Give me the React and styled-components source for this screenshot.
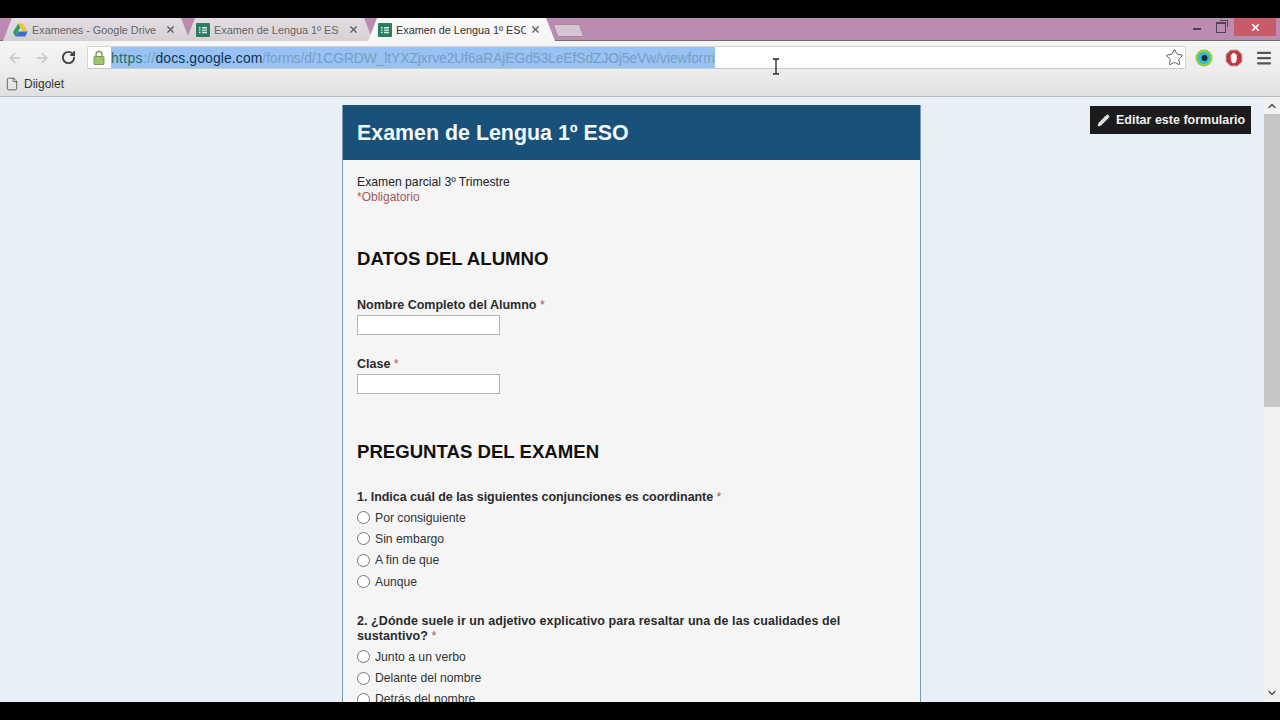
import React from "react";
import styled, { createGlobalStyle } from "styled-components";
import { ArrowLeft, ArrowRight, RotateCw, Star, Menu, X, Pencil, File, ChevronUp } from "lucide-react";

const Global = createGlobalStyle`
  html, body {
    margin: 0;
    padding: 0;
    height: 100%;
    background: #000;
    overflow: hidden;
    font-family: "Liberation Sans", Arial, sans-serif;
  }
`;

const Screen = styled.div`
  position: relative;
  width: 1280px;
  height: 720px;
  padding: 18px 0;
  box-sizing: border-box;
  background: #000;
  display: flex;
  flex-direction: column;
`;

const TabStrip = styled.div`
  height: 23px;
  box-sizing: border-box;
  flex: none;
  background: #bb8bb0;
  display: flex;
  align-items: flex-end;
  padding-left: 3px;
  border-bottom: 1px solid #6f6a72;
`;

const Tab = styled.div`
  width: 187px;
  height: 23px;
  margin-right: ${({ $gap }) => $gap}px;
  margin-bottom: -1px;
  padding: 0 14.5px 0 10px;
  box-sizing: border-box;
  display: flex;
  align-items: center;
  gap: 4px;
  flex: none;
  background: ${({ $active }) => ($active ? "#f7f7f7" : "linear-gradient(#e4dde3, #d4d1d4)")};
  clip-path: polygon(0 100%, 9px 0, calc(100% - 9px) 0, 100% 100%);
  font-size: 10.85px;
  color: ${({ $active }) => ($active ? "#333" : "#666")};
`;

const TabTitle = styled.span`
  flex: 1;
  min-width: 0;
  margin-right: ${({ $mr }) => $mr}px;
  white-space: nowrap;
  overflow: hidden;
`;

const NewTab = styled.div`
  width: 27px;
  height: 13px;
  margin: 0 0 3px 0;
  background: #d6c4d4;
  border: 1px solid #a78a9f;
  box-sizing: border-box;
  transform: skewX(20deg);
  border-radius: 2px;
`;

const WindowControls = styled.div`
  margin-left: auto;
  height: 100%;
  display: flex;
  align-items: flex-start;
`;

const WinButton = styled.div`
  width: ${({ $w }) => $w}px;
  height: 18px;
  display: flex;
  align-items: center;
  justify-content: center;
  background: ${({ $close }) => ($close ? "#c75c68" : "transparent")};
  color: ${({ $close }) => ($close ? "#fff" : "#4a4552")};
`;

const MinimizeIcon = styled.div`
  width: 8px;
  height: 2px;
  margin-top: 4px;
  background: #4a4552;
`;

const RestoreIcon = styled.div`
  position: relative;
  width: 8px;
  height: 8px;
  border: 1px solid #4a4552;
  border-top-width: 2px;
  &::after {
    content: "";
    position: absolute;
    top: -4px;
    right: -3px;
    width: 7px;
    height: 6px;
    border: 1px solid #4a4552;
    border-left: 0;
    border-bottom: 0;
  }
`;

const Toolbar = styled.div`
  height: 31px;
  box-sizing: border-box;
  flex: none;
  background: linear-gradient(#f5f5f5, #ececec);
  display: flex;
  align-items: center;
  padding: 2px 0 0 1px;
`;

const NavButton = styled.div`
  width: 27px;
  display: flex;
  justify-content: center;
  color: ${({ $on }) => ($on ? "#444" : "#c4c4c4")};
`;

const Omnibox = styled.div`
  width: 1099px;
  flex: none;
  height: 23px;
  margin: 0 3px 0 5px;
  background: #fff;
  border: 1px solid #d8d6d2;
  border-bottom-color: #c8c8c8;
  border-radius: 2px;
  box-sizing: border-box;
  display: flex;
  align-items: center;
  padding-left: 5px;
`;

const Url = styled.div`
  margin-left: 6px;
  height: 21px;
  line-height: 23px;
  background: #96c3f3;
  font-size: 13.9px;
  white-space: nowrap;
`;

const UrlPart = styled.span`
  color: ${({ $c }) => $c};
  letter-spacing: ${({ $ls }) => $ls}px;
`;

const StarSlot = styled.div`
  margin-left: auto;
  margin-right: 1px;
  display: flex;
  color: #555;
`;

const ExtSlot = styled.div`
  width: 30px;
  flex: none;
  display: flex;
  justify-content: center;
  color: #555;
`;

const Bookmarks = styled.div`
  height: 25px;
  box-sizing: border-box;
  flex: none;
  background: linear-gradient(#ececec, #e0e0e0);
  border-bottom: 1px solid #bcbcbc;
  display: flex;
  align-items: center;
  gap: 5px;
  padding: 0 0 1px 5px;
  font-size: 12px;
  color: #333;
`;

const Viewport = styled.div`
  position: relative;
  flex: 1;
  min-height: 0;
  display: flex;
  overflow: hidden;
  background: #e9eff7;
`;

const Page = styled.div`
  flex: 1;
  display: flex;
  justify-content: center;
  padding: 8px 1px 0 0;
`;

const Card = styled.div`
  width: 579px;
  box-sizing: border-box;
  background: #f5f5f6;
  border-left: 1px solid #7d9ab3;
  border-right: 1px solid #7d9ab3;
`;

const CardHeader = styled.h1`
  margin: 0;
  height: 55px;
  line-height: 57px;
  padding-left: 14px;
  background: #1a5179;
  color: #f2f8fc;
  font-size: 21.4px;
  font-weight: bold;
`;

const CardBody = styled.div`
  padding: 15px 14px 0;
`;

const Description = styled.div`
  font-size: 12.2px;
  line-height: 15px;
  color: #222;
`;

const Required = styled.div`
  font-size: 12px;
  line-height: 15px;
  color: #a9575c;
`;

const SectionTitle = styled.h2`
  margin: ${({ $top }) => $top}px 0 0;
  font-size: 18.6px;
  line-height: 22px;
  font-weight: bold;
  color: #111;
`;

const Field = styled.div`
  margin-top: ${({ $top }) => $top}px;
`;

const Label = styled.div`
  font-size: 12.5px;
  line-height: 15px;
  font-weight: bold;
  color: #2b2b2b;
  letter-spacing: ${({ $ls = 0 }) => $ls}px;
`;

const Star2 = styled.span`
  font-weight: normal;
  color: #b0585c;
`;

const TextBox = styled.div`
  width: 143px;
  height: 20px;
  margin-top: 2px;
  background: #fff;
  border: 1px solid #b4b4b4;
  box-sizing: border-box;
`;

const Options = styled.div`
  margin-top: 2px;
`;

const Option = styled.div`
  height: 21.3px;
  display: flex;
  align-items: center;
  gap: 5px;
  font-size: 12.2px;
  color: #333;
`;

const Radio = styled.span`
  width: 13px;
  height: 13px;
  border-radius: 50%;
  border: 1px solid #777;
  background: #fff;
  box-sizing: border-box;
  flex: none;
`;

const EditButton = styled.div`
  position: absolute;
  top: 9px;
  right: 29px;
  width: 161px;
  height: 28px;
  box-sizing: border-box;
  background: #1c1c1c;
  color: #f0f0f0;
  display: flex;
  align-items: center;
  gap: 6px;
  padding-left: 7px;
  font-size: 12.5px;
  font-weight: bold;
`;

const Scrollbar = styled.div`
  width: 16px;
  flex: none;
  background: #f1f1f1;
  display: flex;
  flex-direction: column;
  align-items: center;
  color: #555;
`;

const ScrollArrow = styled.div`
  height: 17px;
  display: flex;
  align-items: center;
`;

const ScrollThumb = styled.div`
  width: 100%;
  height: 293px;
  background: #c6c6c6;
`;

const ScrollEnd = styled.div`
  margin-top: auto;
  height: 17px;
  display: flex;
  align-items: center;
  transform: rotate(180deg);
`;

const Cursor = styled.svg`
  position: absolute;
  left: 771px;
  top: 58px;
`;

const DriveIcon = () => (
  <svg width="15" height="14" viewBox="0 0 16 14">
    <path d="M5.500 0h5l5 8.500h-5z" fill="#f2c230" />
    <path d="M5.500 0L0 9.500 2.500 14l5.300-9.600z" fill="#2f9e5b" />
    <path d="M2.500 14h10.600l2.400-5.500H5.700z" fill="#3f6fc8" />
  </svg>
);

const SheetsIcon = () => (
  <svg width="14" height="14" viewBox="0 0 14 14">
    <rect width="14" height="14" rx="1" fill="#2a7d5f" />
    <path d="M3 4h1.500v1.400H3zM6 4h5v1.400H6zM3 6.400h1.500v1.400H3zM6 6.400h5v1.400H6zM3 8.800h1.500v1.400H3zM6 8.800h5v1.400H6z" fill="#d8efe4" />
  </svg>
);

const LockIcon = () => (
  <svg width="12" height="15" viewBox="0 0 12 15">
    <path d="M3 7V4.500a3 3 0 0 1 6 0V7" fill="none" stroke="#8c8c70" strokeWidth="1.400" />
    <rect x="1" y="6.500" width="10" height="8" rx="1" fill="#9fc46a" stroke="#7a9a50" />
  </svg>
);

const DiigoIcon = () => (
  <svg width="18" height="18" viewBox="0 0 18 18">
    <circle cx="9" cy="9" r="8.500" fill="#8ed03c" />
    <circle cx="9" cy="9" r="6" fill="#35b8dc" />
    <circle cx="9.500" cy="9" r="3" fill="#12303f" />
  </svg>
);

const StopIcon = () => (
  <svg width="18" height="18" viewBox="0 0 18 18">
    <path d="M5.500 1h7L17 5.500v7L12.500 17h-7L1 12.500v-7z" fill="#c5323a" stroke="#b7b0b0" />
    <path d="M5.800 8V5.500h1.200V4.500h1.200V3.800h1.200v.7h1.200v1h1.100V10c0 2.500-1 4.300-3 4.300s-2.500-1.800-3-4.300z" fill="#fff" />
  </svg>
);

const tabs = [
  { id: "drive", title: "Examenes - Google Drive", gap: -4, mr: 0, icon: <DriveIcon /> },
  { id: "form1", title: "Examen de Lengua 1º ESO", gap: -5, mr: 5, icon: <SheetsIcon /> },
  { id: "form2", title: "Examen de Lengua 1º ESO", gap: 0, mr: 0, icon: <SheetsIcon />, active: true },
];

const q1 = ["Por consiguiente", "Sin embargo", "A fin de que", "Aunque"];
const q2 = ["Junto a un verbo", "Delante del nombre", "Detrás del nombre"];

export default function App() {
  return (
    <Screen>
      <Global />
      <TabStrip>
        {tabs.map((t) => (
          <Tab key={t.id} $gap={t.gap} $active={t.active}>
            {t.icon}
            <TabTitle $mr={t.mr}>{t.title}</TabTitle>
            <X size={11} strokeWidth={2.5} color="#555" />
          </Tab>
        ))}
        <NewTab />
        <WindowControls>
          <WinButton $w={22}>
            <MinimizeIcon />
          </WinButton>
          <WinButton $w={26}>
            <RestoreIcon />
          </WinButton>
          <WinButton $w={42} $close>
            <X size={11} strokeWidth={3.5} />
          </WinButton>
          <WinButton $w={4} />
        </WindowControls>
      </TabStrip>
      <Toolbar>
        <NavButton>
          <ArrowLeft size={16} />
        </NavButton>
        <NavButton>
          <ArrowRight size={16} />
        </NavButton>
        <NavButton $on>
          <RotateCw size={15} strokeWidth={3} />
        </NavButton>
        <Omnibox>
          <LockIcon />
          <Url>
            <UrlPart $c="#1f6f68" $ls={0.35}>https</UrlPart>
            <UrlPart $c="#7b9dc2" $ls={0.35}>://</UrlPart>
            <UrlPart $c="#0f3355" $ls={0.13}>docs.google.com</UrlPart>
            <UrlPart $c="#7b9dc2" $ls={-0.1}>/forms/d/1CGRDW_ltYXZjxrve2Uf6aRAjEGd53LeEfSdZJOj5eVw/viewform</UrlPart>
          </Url>
          <StarSlot>
            <Star size={19} strokeWidth={1.2} />
          </StarSlot>
        </Omnibox>
        <ExtSlot>
          <DiigoIcon />
        </ExtSlot>
        <ExtSlot>
          <StopIcon />
        </ExtSlot>
        <ExtSlot>
          <Menu size={18} strokeWidth={3} />
        </ExtSlot>
      </Toolbar>
      <Bookmarks>
        <File size={14} strokeWidth={1.2} />
        Diigolet
      </Bookmarks>
      <Viewport>
        <Page>
          <Card>
            <CardHeader>Examen de Lengua 1º ESO</CardHeader>
            <CardBody>
              <Description>Examen parcial 3º Trimestre</Description>
              <Required>*Obligatorio</Required>
              <SectionTitle $top={43}>DATOS DEL ALUMNO</SectionTitle>
              <Field $top={28}>
                <Label>
                  Nombre Completo del Alumno <Star2>*</Star2>
                </Label>
                <TextBox />
              </Field>
              <Field $top={22}>
                <Label>
                  Clase <Star2>*</Star2>
                </Label>
                <TextBox />
              </Field>
              <SectionTitle $top={47}>PREGUNTAS DEL EXAMEN</SectionTitle>
              <Field $top={27}>
                <Label $ls={-0.05}>
                  1. Indica cuál de las siguientes conjunciones es coordinante <Star2>*</Star2>
                </Label>
                <Options>
                  {q1.map((o) => (
                    <Option key={o}>
                      <Radio />
                      {o}
                    </Option>
                  ))}
                </Options>
              </Field>
              <Field $top={22}>
                <Label $ls={0.065}>
                  2. ¿Dónde suele ir un adjetivo explicativo para resaltar una de las cualidades del sustantivo?{" "}
                  <Star2>*</Star2>
                </Label>
                <Options>
                  {q2.map((o) => (
                    <Option key={o}>
                      <Radio />
                      {o}
                    </Option>
                  ))}
                </Options>
              </Field>
            </CardBody>
          </Card>
        </Page>
        <EditButton>
          <Pencil size={13} fill="#ddd" strokeWidth={1.5} />
          Editar este formulario
        </EditButton>
        <Scrollbar>
          <ScrollArrow>
            <ChevronUp size={12} strokeWidth={3} />
          </ScrollArrow>
          <ScrollThumb />
          <ScrollEnd>
            <ChevronUp size={12} strokeWidth={3} />
          </ScrollEnd>
        </Scrollbar>
      </Viewport>
      <Cursor width="10" height="17" viewBox="0 0 10 17">
        <path d="M2 1h2l1 1 1-1h2M5 2v13M2 16h2l1-1 1 1h2" fill="none" stroke="#222" strokeWidth="1.300" />
      </Cursor>
    </Screen>
  );
}
